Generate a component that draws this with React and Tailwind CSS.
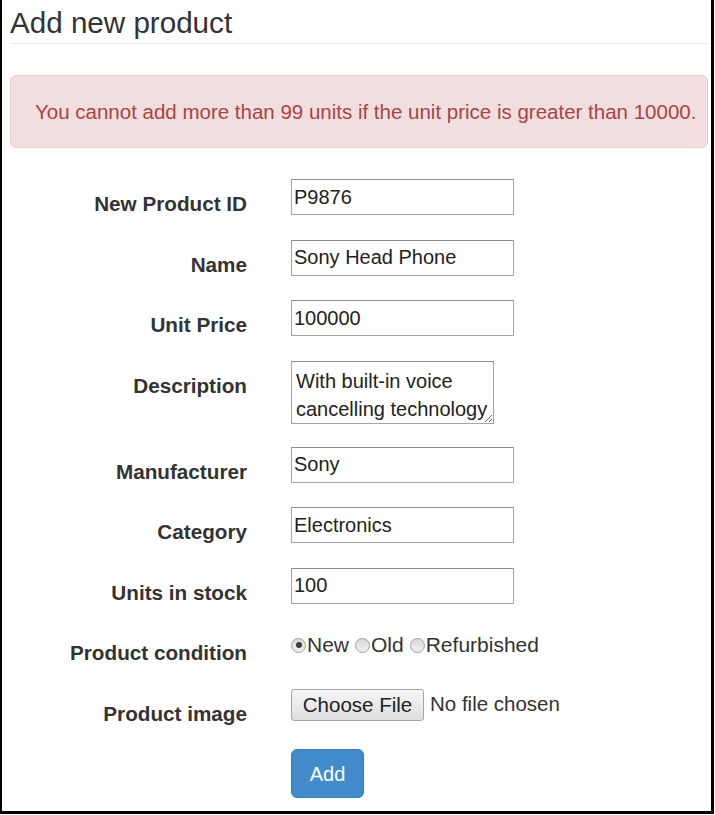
import React from "react";

const font = { fontFamily: '"Liberation Sans", Arial, sans-serif' };

function Row({ label, children, className = "mb-[20.5px]" }) {
  return (
    <div className={`flex items-start ${className}`}>
      <label className="w-[245px] shrink-0 pb-[1px] pt-[11px] text-right text-[20.7px] font-bold leading-[28px] text-[#333]">
        {label}
      </label>
      <div className="pl-[44px]">{children}</div>
    </div>
  );
}

function TextInput({ value }) {
  return (
    <input
      type="text"
      defaultValue={value}
      className="h-[36px] w-[223px] border border-[#a6a6a6] border-t-[#8e8e8e] bg-white pl-[2px] text-[20px] text-[#222] outline-none"
    />
  );
}

function Radio({ checked, label }) {
  return (
    <span className="inline-flex items-center">
      <span className="mr-[1px] flex h-[15px] w-[15px] items-center justify-center rounded-full border border-[#a0a0a0] bg-gradient-to-b from-[#d8d8d8] to-[#f0f0f0]">
        {checked && <span className="h-[6px] w-[6px] rounded-full bg-[#3c3c3c]" />}
      </span>
      <span>{label}</span>
    </span>
  );
}

export default function App() {
  return (
    <div style={font} className="h-[815px] w-[715px] bg-white">
      <div className="h-[814px] w-[714px] border-b-[3px] border-l-2 border-r-[3px] border-black">
        <div className="ml-[8px] mr-[3px] border-b border-[#eaeaea] pb-[4px] pt-[6px]">
          <h1 className="text-[29.6px] leading-[33px] text-[#333]">Add new product</h1>
        </div>

        <div className="ml-[8px] mr-[3px] mt-[31px] rounded-[6px] border border-[#ebccd1] bg-[#f2dede] pb-[21px] pl-[24px] pt-[22px] text-[20.5px] leading-[28px] text-[#a94442]">
          You cannot add more than 99 units if the unit price is greater than 10000.
        </div>

        <form className="mt-[31px]" onSubmit={(e) => e.preventDefault()}>
          <Row label="New Product ID"><TextInput value="P9876" /></Row>
          <Row label="Name"><TextInput value="Sony Head Phone" /></Row>
          <Row label="Unit Price"><TextInput value="100000" /></Row>
          <Row label="Description" className="mb-[23px]">
            <textarea
              defaultValue="With built-in voice cancelling technology"
              className="block h-[63px] w-[203px] overflow-hidden border border-[#a6a6a6] border-t-[#8e8e8e] pl-[4px] pr-[3px] pt-[5px] text-[20px] leading-[28px] text-[#222] outline-none"
            />
          </Row>
          <Row label="Manufacturer"><TextInput value="Sony" /></Row>
          <Row label="Category"><TextInput value="Electronics" /></Row>
          <Row label="Units in stock"><TextInput value="100" /></Row>
          <Row label="Product condition">
            <div className="flex h-[34px] items-center gap-[6px] text-[21px] leading-[28px] text-[#333]">
              <Radio checked label="New" />
              <Radio label="Old" />
              <Radio label="Refurbished" />
            </div>
          </Row>
          <Row label="Product image">
            <div className="flex items-center text-[20.5px] text-[#333]">
              <button
                type="button"
                className="h-[32px] w-[133px] rounded-[3px] border border-[#a6a6a6] bg-gradient-to-b from-[#f6f6f6] to-[#dedede] text-[20.5px] text-[#222]"
              >
                Choose File
              </button>
              <span className="ml-[6px]">No file chosen</span>
            </div>
          </Row>
          <div className="flex">
            <div className="w-[245px] shrink-0" />
            <div className="pl-[44px]">
              <button
                type="submit"
                className="h-[49px] w-[73px] rounded-[6px] border border-[#357ebd] bg-[#428bca] text-[20px] text-white"
              >
                Add
              </button>
            </div>
          </div>
        </form>
      </div>
    </div>
  );
}
